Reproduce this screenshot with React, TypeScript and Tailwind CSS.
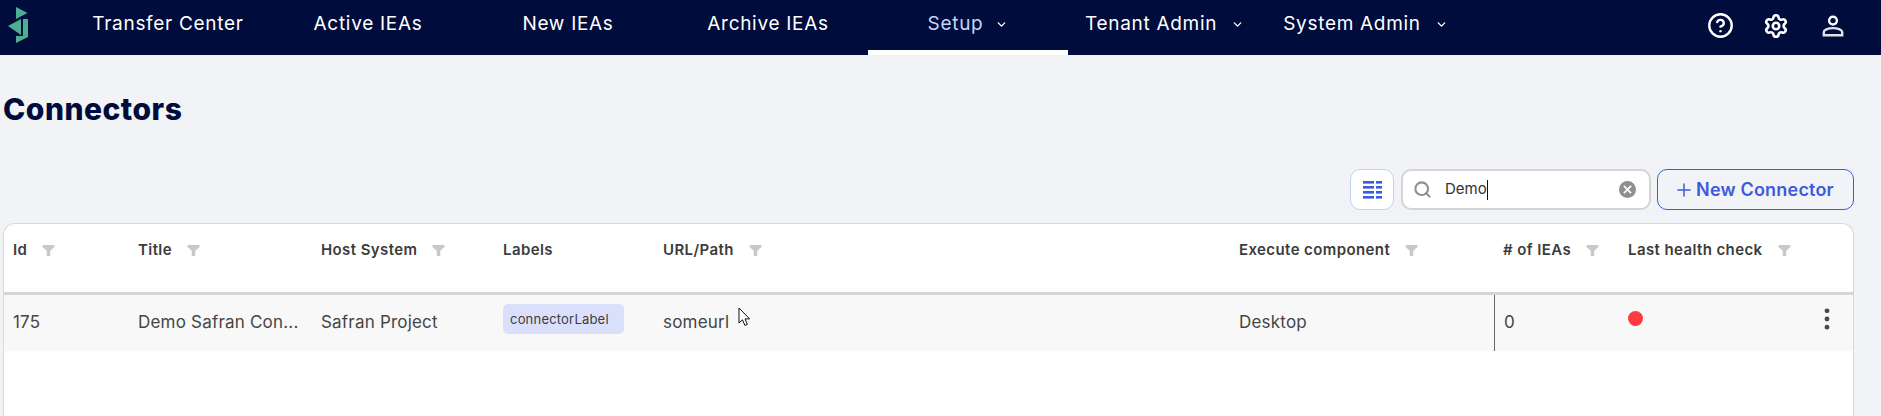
import { ChevronDown, CircleHelp, EllipsisVertical, Search, Settings } from "lucide-react";

const tabs = ["Transfer Center", "Active IEAs", "New IEAs", "Archive IEAs"];

function FilterIcon() {
  return (
    <svg viewBox="0 0 12 12" className="h-[13px] w-[13px] shrink-0 fill-[#c8c8c8]">
      <path d="M0.5 1h11v1.8L7.6 6.3v4.7H4.4V6.3L0.5 2.8z" />
    </svg>
  );
}

function HeaderCell({ label, filter = true }: { label: string; filter?: boolean }) {
  return (
    <div className="flex items-start gap-[15px] pt-[16px] pl-[9px] text-[15px] leading-[20px] font-semibold tracking-[0.4px] whitespace-nowrap text-[#3c3c3c]">
      <span>{label}</span>
      {filter && (
        <span className="pt-[4px]">
          <FilterIcon />
        </span>
      )}
    </div>
  );
}

export default function App() {
  return (
    <div className="flex h-[416px] flex-col overflow-hidden bg-[#f1f3f7] font-['Inter',sans-serif]">
      <header className="flex h-[55px] shrink-0 items-stretch bg-[#000c3b] text-[19px] tracking-[0.7px] text-white">
        {/* Logo */}
        <div className="w-[68px] shrink-0">
          <svg viewBox="0 0 40 55" className="h-[55px] w-[40px] fill-[#4fae92]">
            <polygon points="16,7 27.5,13 16,19" />
            <polygon points="8,26 21,19 21,35" />
            <polygon points="23,19 28,19 28,37 16,43 16,36 23,36" />
          </svg>
        </div>

        {tabs.map((t) => (
          <a key={t} className="flex w-[200px] items-center justify-center pb-[6px] whitespace-nowrap">
            {t}
          </a>
        ))}

        <a className="flex w-[200px] items-center justify-center gap-[12px] border-b-[5px] border-white pb-[1px] text-[#c3d6f5]">
          Setup
          <ChevronDown className="h-[13px] w-[13px] text-white" strokeWidth={2.5} />
        </a>

        <a className="ml-[17px] flex items-center gap-[14px] pb-[6px] whitespace-nowrap">
          Tenant Admin
          <ChevronDown className="h-[13px] w-[13px]" strokeWidth={2.5} />
        </a>
        <a className="ml-[39px] flex items-center gap-[14px] pb-[6px] whitespace-nowrap">
          System Admin
          <ChevronDown className="h-[13px] w-[13px]" strokeWidth={2.5} />
        </a>

        <div className="ml-auto flex items-center pr-[35px] pb-[4px]">
          <CircleHelp className="h-[27px] w-[27px]" strokeWidth={2.1} />
          <Settings className="ml-[29px] h-[26px] w-[26px]" strokeWidth={2.4} />
          <svg viewBox="0 0 24 24" className="ml-[31px] h-[26px] w-[26px] fill-none stroke-white" strokeWidth="2.2">
            <circle cx="12" cy="7" r="3.6" />
            <path className="stroke-[#dfe3ea]" d="M3.5 20.5v-3c0-1.8 3.5-3.5 8.5-3.5s8.500 1.700 8.500 3.500v3z" />
          </svg>
        </div>
      </header>

      <h1 className="pt-[36px] pl-[3px] text-[30px] leading-[36px] font-extrabold tracking-[0.5px] text-[#000c3b]">
        Connectors
      </h1>

      {/* Toolbar */}
      <div className="mt-[42px] flex h-[41px] items-stretch justify-end pr-[27px]">
        <button className="flex w-[44px] items-center justify-center rounded-[10px] border border-[#c3cffa] bg-white">
          <svg viewBox="0 0 19 18" className="h-[18px] w-[19px] fill-[#3c5be0]">
            <rect x="0" y="0" width="11" height="2.6" />
            <rect x="13" y="0" width="6" height="2.6" />
            <rect x="0" y="5" width="11" height="2.6" />
            <rect x="13" y="5" width="6" height="2.6" />
            <rect x="0" y="10" width="11" height="2.6" />
            <rect x="13" y="10" width="6" height="2.6" />
            <rect x="0" y="15" width="11" height="2.6" />
            <rect x="13" y="15" width="6" height="2.6" />
          </svg>
        </button>

        <div className="ml-[7px] flex w-[250px] items-center rounded-[10px] border-2 border-[#d4d4d4] bg-white pr-[13px] pl-[10px]">
          <Search className="h-[19px] w-[19px] text-[#8f8f8f]" strokeWidth={2.6} />
          <span className="ml-[13px] text-[15px] text-[#333]">Demo</span>
          <span className="h-[20px] w-px bg-[#111]" />
          {/* Clear */}
          <span className="ml-auto flex h-[17px] w-[17px] items-center justify-center rounded-full bg-[#8f8f8f]">
            <svg viewBox="0 0 10 10" className="h-[9px] w-[9px] stroke-white" strokeWidth="2">
              <path d="M1 1l8 8M9 1L1 9" />
            </svg>
          </span>
        </div>

        <button className="ml-[6px] flex w-[197px] items-center justify-center gap-[5px] rounded-[10px] border border-[#3c5be0] text-[18px] font-semibold tracking-[0.2px] whitespace-nowrap text-[#3c5be0]">
          <svg viewBox="0 0 14 14" className="h-[14px] w-[14px] stroke-[#3c5be0]" strokeWidth="1.5">
            <path d="M7 0.500v13M0.500 7h13" />
          </svg>
          New Connector
        </button>
      </div>

      {/* Table */}
      <div className="relative mt-[13px] mr-[27px] ml-[3px] min-h-0 flex-1 rounded-t-[12px] border border-b-0 border-[#d9d9d9] bg-white">
        <div className="grid h-[71px] grid-cols-[125px_183px_182px_160px_576px_264px_125px_1fr] border-b-[3px] border-[#d5d5d5]">
          <HeaderCell label="Id" />
          <HeaderCell label="Title" />
          <HeaderCell label="Host System" />
          <HeaderCell label="Labels" filter={false} />
          <HeaderCell label="URL/Path" />
          <HeaderCell label="Execute component" />
          <HeaderCell label="# of IEAs" />
          <HeaderCell label="Last health check" />
        </div>

        <div className="grid h-[56px] grid-cols-[125px_183px_182px_160px_576px_264px_125px_1fr] bg-[#f8f8f8] text-[17px] tracking-[0.2px] text-[#454545]">
          <div className="flex items-center pl-[9px]">175</div>
          <div className="flex items-center pl-[9px] whitespace-nowrap">Demo Safran Con...</div>
          <div className="flex items-center pl-[9px] whitespace-nowrap">Safran Project</div>
          <div className="pt-[9px] pl-[9px]">
            <span className="block h-[30px] w-[121px] rounded-[5px] bg-[#dae0fb] pt-[5px] pl-[7px] text-[13px] leading-[20px] tracking-[0.2px] text-[#3c3c3c]">
              connectorLabel
            </span>
          </div>
          <div className="flex items-center pl-[9px]">someurl</div>
          <div className="flex items-center pl-[9px]">Desktop</div>
          <div className="flex items-center border-l border-[#666] pl-[9px]">0</div>
          <div className="relative flex items-center pl-[9px]">
            <span className="mb-[10px] h-[15px] w-[15px] rounded-full bg-[#fd3a3f]" />
            <EllipsisVertical className="absolute top-[10px] right-[12px] h-[28px] w-[28px] text-[#4a4a4a]" strokeWidth={2.2} />
          </div>
        </div>

        {/* Mouse cursor from the capture */}
        <svg viewBox="0 0 12 20" className="absolute top-[83px] left-[734px] h-[20px] w-[12px] fill-white stroke-[#111]" strokeWidth="1">
          <path d="M1 1v15l3.500-3.200 2.400 5.600 2.500-1-2.400-5.500h4.600z" />
        </svg>
      </div>
    </div>
  );
}
